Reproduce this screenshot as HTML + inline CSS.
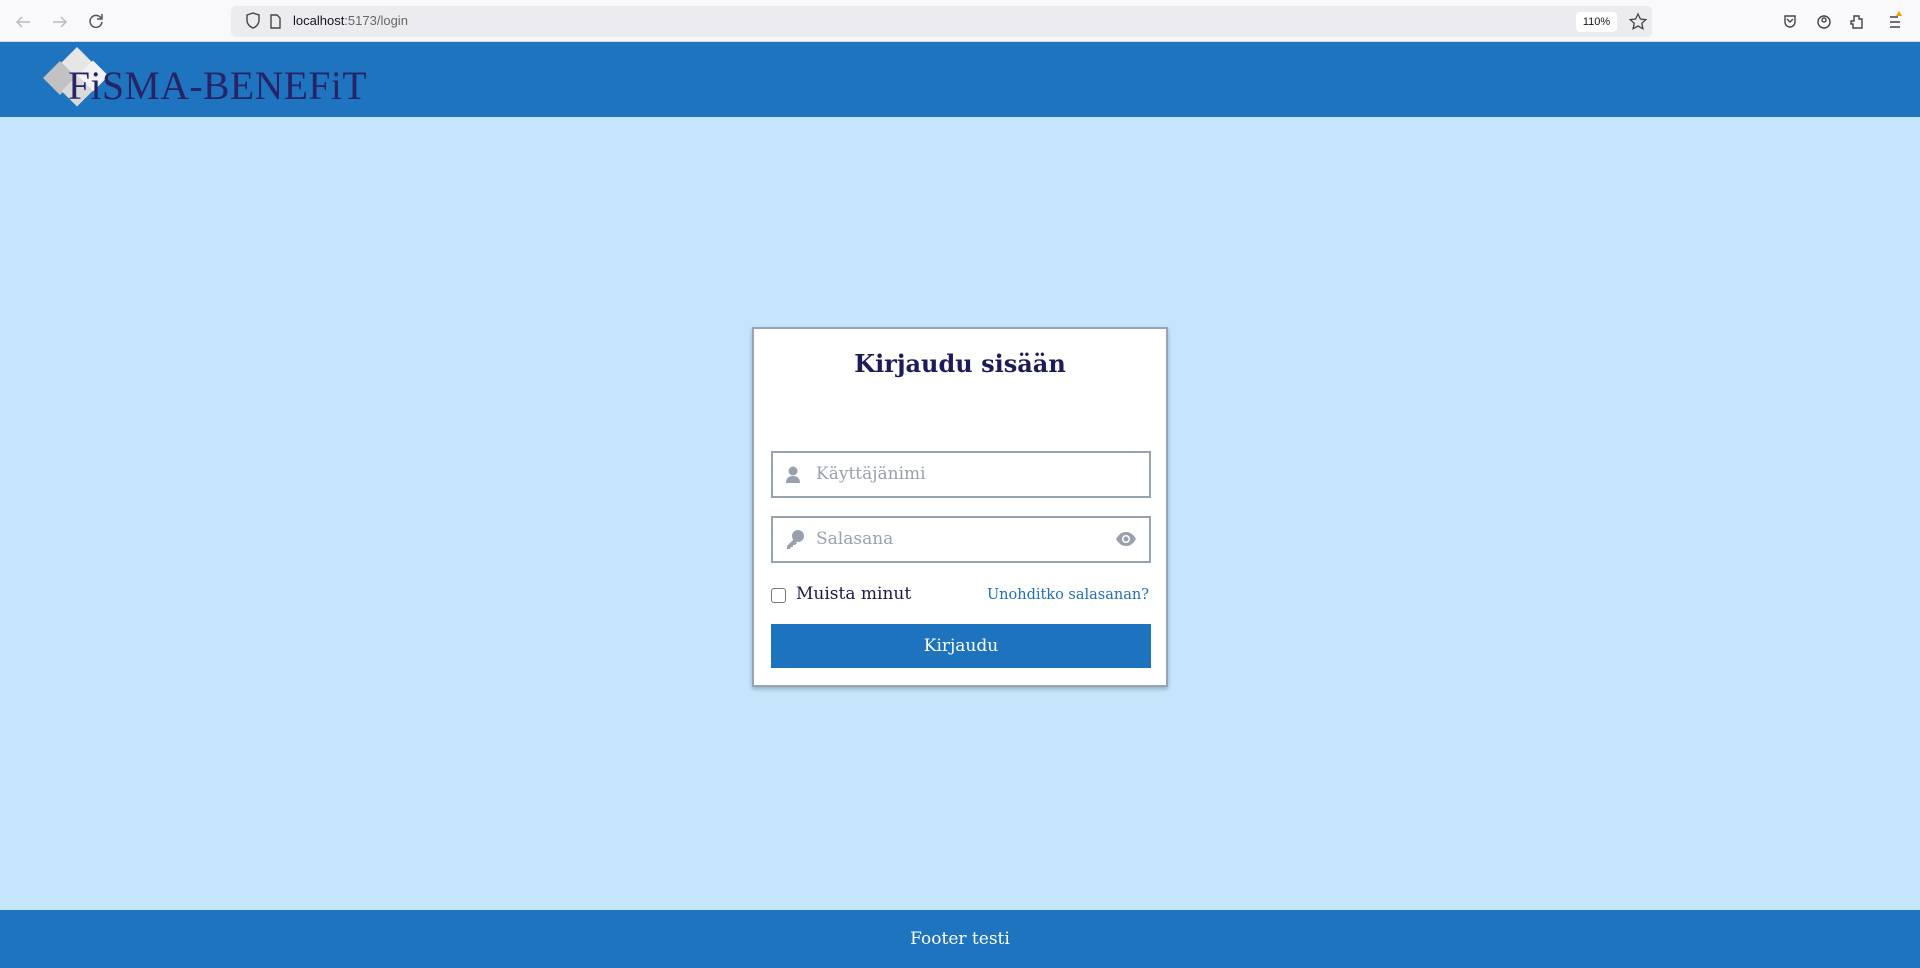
<!DOCTYPE html>
<html><head><meta charset="utf-8"><style>
*{box-sizing:border-box;margin:0;padding:0}
body{width:1920px;height:968px;overflow:hidden;background:#c5e5fd;font-family:"DejaVu Serif","Liberation Serif",serif;position:relative}
.chrome{position:absolute;left:0;top:0;width:1920px;height:42px;background:#f9f9fb;border-bottom:1px solid #d8d8dc}
.url{position:absolute;left:231px;top:6px;width:1421px;height:31px;background:#ececf0;border-radius:5px}
.url span{position:absolute;left:62px;top:7px;font:13px "Liberation Sans",sans-serif;color:#15141a}
.zoomb{position:absolute;left:1576px;top:12px;width:41px;height:20px;background:#fff;border-radius:4px;font:11px "Liberation Sans",sans-serif;text-align:center;line-height:20px;color:#15141a}
.header{position:absolute;left:0;top:42px;width:1920px;height:75px;background:#1e74bf}
.logo{position:absolute;left:68px;top:20px;font:40px "Liberation Serif",serif;color:#262467;letter-spacing:0.5px;transform-origin:0 0;transform:scaleX(0.99)}
.footer{position:absolute;left:0;top:910px;width:1920px;height:58px;background:#1e74bf;color:#fff;text-align:center;line-height:58px;font-size:17px}
.card{position:absolute;left:752px;top:327px;width:416px;height:360px;background:#fff;border:2px solid #98a2b3;box-shadow:0 2px 4px rgba(0,0,0,.25)}
h1{position:absolute;left:0;width:100%;top:20px;text-align:center;font-size:24px;font-weight:bold;color:#1d1b5a}
.inp{position:absolute;left:17px;width:380px;height:47px;border:2px solid #98a2b3;font-size:17px;color:#9aa1ae}
.inp span{position:absolute;left:43px;top:11px}
.chk{position:absolute;left:17px;top:259px;width:15px;height:15px;border:1.5px solid #777;border-radius:3px}
.rem{position:absolute;left:42px;top:255px;font-size:17px;color:#1d1b4e}
.link{position:absolute;right:17px;top:258px;font-size:14.5px;color:#1f6fbf}
.btn{position:absolute;left:17px;top:295px;width:380px;height:44px;background:#1e73be;color:#fff;text-align:center;line-height:44px;font-size:17px}
</style></head><body>
<div class="chrome">
<svg width="120" height="42" style="position:absolute;left:0;top:0" fill="none" stroke="#bbb" stroke-width="1.5"><path d="M17 22h13M22 17l-5 5 5 5"/><path d="M53 22h13M61 17l5 5-5 5"/><path stroke="#555" d="M101 18a6 6 0 1 0 1 4M102 14v5h-5"/></svg>
<div class="url"><svg width="60" height="31" fill="none" stroke="#444" stroke-width="1.4"><path d="M16 9l6-2 6 2v5c0 4-3 7-6 8-3-1-6-4-6-8z"/><path d="M40 9h6l3 3v10h-9z"/></svg><span>localhost<span style="position:static;color:#666">:5173/login</span></span><svg width="20" height="20" style="position:absolute;left:1397px;top:6px" fill="none" stroke="#444" stroke-width="1.3"><path d="M10 2l2.4 5 5.4.6-4 3.7 1.1 5.4L10 14l-4.9 2.7 1.1-5.4-4-3.7 5.4-.6z"/></svg></div>
<div class="zoomb">110%</div>
<svg width="300" height="42" style="position:absolute;left:1620px;top:0" fill="none" stroke="#444" stroke-width="1.4"><path d="M165 16h10v6a5 5 0 0 1-10 0zM167 19l3 3 3-3"/><circle cx="204" cy="22" r="6"/><circle cx="204" cy="20" r="2"/><path d="M234 16h5v3h3v9h-9v-4h-2v-3h3z"/><path d="M270 17h8M270 22h10M270 27h10"/><path d="M276 16l3-5 3 5z" fill="#f90" stroke="none"/></svg>
</div>
<div class="header">
<svg width="130" height="75" style="position:absolute;left:0;top:0"><rect x="65" y="10" width="24" height="24" transform="rotate(45 77 22)" fill="#e6e6e6"/><rect x="48" y="24" width="24" height="24" transform="rotate(45 60 36)" fill="#c2c2c2"/><rect x="82" y="23" width="22" height="22" transform="rotate(45 93 34)" fill="#f2f2f2"/><rect x="66" y="38" width="22" height="22" transform="rotate(45 77 49)" fill="#dadada"/></svg>
<div class="logo">FiSMA-BENEFiT</div>
</div>
<div class="card">
<h1>Kirjaudu sisään</h1>
<div class="inp" style="top:122px"><svg width="20" height="20" style="position:absolute;left:12px;top:12px" fill="#9aa1ae"><circle cx="8" cy="6" r="4.5"/><path d="M1 18c0-5 3-7 7-7s7 2 7 7z"/></svg><span>Käyttäjänimi</span></div>
<div class="inp" style="top:187px"><svg width="22" height="22" style="position:absolute;left:12px;top:11px" fill="#9aa1ae"><circle cx="13" cy="7" r="6"/><path d="M9 10l-7 7v3h3l1-2h2v-2h2l2-2z"/></svg><span>Salasana</span><svg width="22" height="16" style="position:absolute;right:12px;top:13px"><path d="M1 8c3-5 6-7 10-7s7 2 10 7c-3 5-6 7-10 7s-7-2-10-7z" fill="#9aa1ae"/><circle cx="11" cy="8" r="4" fill="#fff"/><circle cx="11" cy="8" r="2.5" fill="#9aa1ae"/></svg></div>
<div class="chk"></div>
<div class="rem">Muista minut</div>
<div class="link">Unohditko salasanan?</div>
<div class="btn">Kirjaudu</div>
</div>
<div class="footer">Footer testi</div>
</body></html>
